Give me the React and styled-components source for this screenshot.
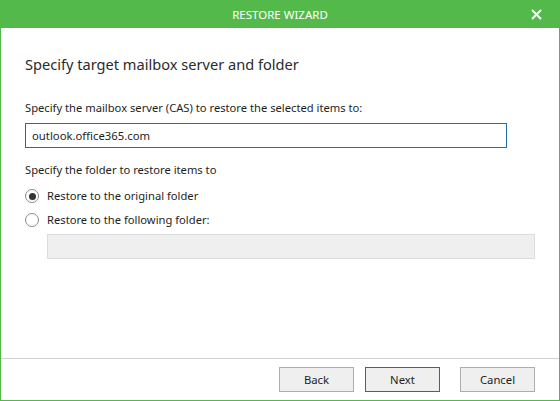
import React, { useState } from 'react'
import styled, { createGlobalStyle } from 'styled-components'

const GlobalStyle = createGlobalStyle`
  html, body {
    margin: 0;
    padding: 0;
    background: #ffffff;
  }
  body {
    font-family: "Noto Sans", "Open Sans", Arial, sans-serif;
    color: #1e1e1e;
  }
`

const Window = styled.div`
  width: 560px;
  height: 401px;
  box-sizing: border-box;
  display: flex;
  flex-direction: column;
  border: 1px solid #54b94b;
  border-top: none;
  background: #fff;
`

const TitleBar = styled.div`
  height: 28px;
  margin: 0 -1px;
  background: #54b94b;
  color: #fff;
  display: flex;
  align-items: center;
  justify-content: center;
  position: relative;
  font-size: 11.5px;
`

const CloseButton = styled.button`
  position: absolute;
  right: 18px;
  top: 8px;
  width: 12px;
  height: 12px;
  padding: 0;
  border: none;
  background: transparent;
  display: flex;
  align-items: center;
  justify-content: center;
  cursor: pointer;
`

const Content = styled.div`
  flex: 1;
  padding: 0 24px;
  display: flex;
  flex-direction: column;
`

const Heading = styled.h1`
  margin: 26px 0 0;
  font-size: 14.6px;
  font-weight: 400;
  line-height: 20px;
  color: #2b2b2b;
`

const Label = styled.div`
  font-size: 11.2px;
  line-height: 16px;
  margin-top: ${p => p.$top || 0}px;
`

const TextInput = styled.input`
  box-sizing: border-box;
  margin-top: 7px;
  width: 482px;
  height: 25px;
  border: 1px solid #1e6db0;
  padding: 0 6px;
  font: inherit;
  font-size: 11.3px;
  color: #1e1e1e;
  outline: none;
`

const Options = styled.div`
  margin-top: 10px;
  display: flex;
  flex-direction: column;
  gap: 8px;
`

const Option = styled.label`
  display: flex;
  align-items: center;
  gap: 8px;
  font-size: 11.2px;
  line-height: 16px;
  cursor: pointer;
`

const RadioDot = styled.span`
  box-sizing: border-box;
  width: 14px;
  height: 14px;
  border-radius: 50%;
  border: 1px solid #8a8a8a;
  background: #fff;
  display: flex;
  align-items: center;
  justify-content: center;

  &::after {
    content: '';
    width: 7px;
    height: 7px;
    border-radius: 50%;
    background: ${p => (p.$checked ? '#333' : 'transparent')};
  }
`

const FolderBox = styled.div`
  box-sizing: border-box;
  margin: 6px 0 0 22px;
  width: 488px;
  height: 25px;
  background: #efefef;
  border: 1px solid #dcdcdc;
`

const Footer = styled.div`
  box-sizing: border-box;
  height: 42px;
  border-top: 1px solid #cfcfcf;
  display: flex;
  justify-content: flex-end;
  align-items: flex-start;
  padding: 8px 24px 0 0;
  gap: 11px;
`

const Button = styled.button`
  box-sizing: border-box;
  width: 75px;
  height: 25px;
  margin-left: ${p => p.$gap || 0}px;
  background: #efefef;
  border: 1px solid ${p => (p.$primary ? '#1e6db0' : '#adadad')};
  font: inherit;
  font-size: 11.3px;
  color: #1e1e1e;
  padding: 0;
  cursor: pointer;
`

export default function App() {
  const [target, setTarget] = useState('original')
  const [server, setServer] = useState('outlook.office365.com')

  return (
    <>
      <GlobalStyle />
      <Window>
        <TitleBar>
          RESTORE WIZARD
          <CloseButton aria-label="Close">
            <svg width="11" height="11" viewBox="0 0 11 11">
              <path d="M1 1L10 10M10 1L1 10" stroke="#fff" strokeWidth="2" />
            </svg>
          </CloseButton>
        </TitleBar>
        <Content>
          <Heading>Specify target mailbox server and folder</Heading>
          <Label $top={26}>Specify the mailbox server (CAS) to restore the selected items to:</Label>
          <TextInput value={server} onChange={e => setServer(e.target.value)} />
          <Label $top={14}>Specify the folder to restore items to</Label>
          <Options>
            <Option onClick={() => setTarget('original')}>
              <RadioDot $checked={target === 'original'} />
              Restore to the original folder
            </Option>
            <Option onClick={() => setTarget('other')}>
              <RadioDot $checked={target === 'other'} />
              Restore to the following folder:
            </Option>
          </Options>
          <FolderBox />
        </Content>
        <Footer>
          <Button>Back</Button>
          <Button $primary>Next</Button>
          <Button $gap={9}>Cancel</Button>
        </Footer>
      </Window>
    </>
  )
}
